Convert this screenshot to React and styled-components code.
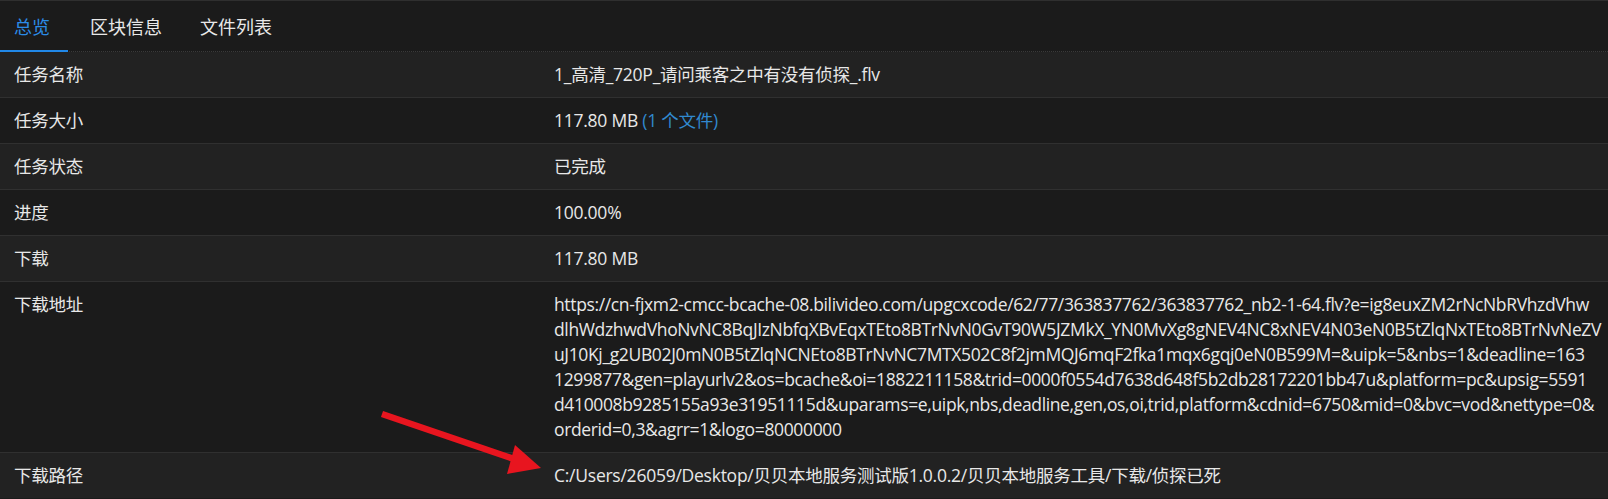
import React from "react";
import styled, { createGlobalStyle } from "styled-components";

const GlobalStyle = createGlobalStyle`
  html, body {
    margin: 0;
    padding: 0;
    background: #1b1b1b;
  }
  body {
    font-family: "Open Sans", "Noto Sans CJK SC", sans-serif;
    color: #e8e8e8;
  }
`;

const Page = styled.div`
  position: relative;
  width: 1608px;
  height: 499px;
  overflow: hidden;
  background: #1b1b1b;
  border-top: 1px solid #2f2f2f;
  box-sizing: border-box;
  font-size: 17.5px;
  letter-spacing: -0.25px;
`;

const TabBar = styled.div`
  display: flex;
  gap: 6px;
  height: 51px;
  box-sizing: border-box;
  border-bottom: 1px dotted #3a3a3a;
`;

const Tab = styled.div`
  display: flex;
  align-items: center;
  height: 51px;
  box-sizing: border-box;
  margin-bottom: -1px;
  padding: 0 16px;
  font-size: 18px;
  letter-spacing: 0;
  color: ${(p) => (p.$active ? "#2b8ce6" : "#e8e8e8")};
  border-bottom: 2px solid ${(p) => (p.$active ? "#2188e8" : "transparent")};
  cursor: pointer;
  &:first-child {
    padding: 0 18px 0 14px;
  }
`;

const Table = styled.div`
  display: flex;
  flex-direction: column;
`;

const Row = styled.div`
  display: grid;
  grid-template-columns: 540px 1fr;
  background: ${(p) => (p.$alt ? "#222222" : "#1b1b1b")};
  border-top: ${(p) => (p.$first ? "none" : "1px solid #303030")};
`;

const Label = styled.div`
  padding: 10px 14px;
  line-height: 25px;
  white-space: nowrap;
`;

const Value = styled.div`
  padding: 10px 12px 10px 14px;
  line-height: 25px;
  white-space: nowrap;
`;

const UrlBlock = styled.div`
  letter-spacing: -0.36px;
`;

const UrlLine = styled.span`
  display: block;
`;

const Link = styled.span`
  color: #3189cf;
  cursor: pointer;
`;

const ArrowSvg = styled.svg`
  position: absolute;
  left: 0;
  top: 0;
  pointer-events: none;
`;

const urlLines = [
  "https://cn-fjxm2-cmcc-bcache-08.bilivideo.com/upgcxcode/62/77/363837762/363837762_nb2-1-64.flv?e=ig8euxZM2rNcNbRVhzdVhw",
  "dlhWdzhwdVhoNvNC8BqJIzNbfqXBvEqxTEto8BTrNvN0GvT90W5JZMkX_YN0MvXg8gNEV4NC8xNEV4N03eN0B5tZlqNxTEto8BTrNvNeZV",
  "uJ10Kj_g2UB02J0mN0B5tZlqNCNEto8BTrNvNC7MTX502C8f2jmMQJ6mqF2fka1mqx6gqj0eN0B599M=&uipk=5&nbs=1&deadline=163",
  "1299877&gen=playurlv2&os=bcache&oi=1882211158&trid=0000f0554d7638d648f5b2db28172201bb47u&platform=pc&upsig=5591",
  "d410008b9285155a93e31951115d&uparams=e,uipk,nbs,deadline,gen,os,oi,trid,platform&cdnid=6750&mid=0&bvc=vod&nettype=0&",
  "orderid=0,3&agrr=1&logo=80000000",
];

const rows = [
  { label: "任务名称", value: "1_高清_720P_请问乘客之中有没有侦探_.flv" },
  {
    label: "任务大小",
    value: (
      <>
        117.80 MB <Link>(1 个文件)</Link>
      </>
    ),
  },
  { label: "任务状态", value: "已完成" },
  { label: "进度", value: "100.00%" },
  { label: "下载", value: "117.80 MB" },
  {
    label: "下载地址",
    value: (
      <UrlBlock>
        {urlLines.map((l, i) => (
          <UrlLine key={i}>{l}</UrlLine>
        ))}
      </UrlBlock>
    ),
  },
  {
    label: "下载路径",
    value: "C:/Users/26059/Desktop/贝贝本地服务测试版1.0.0.2/贝贝本地服务工具/下载/侦探已死",
  },
];

export default function App() {
  return (
    <>
      <GlobalStyle />
      <Page>
        <TabBar>
          <Tab $active>总览</Tab>
          <Tab>区块信息</Tab>
          <Tab>文件列表</Tab>
        </TabBar>
        <Table>
          {rows.map((r, i) => (
            <Row key={r.label} $alt={i % 2 === 0} $first={i === 0}>
              <Label>{r.label}</Label>
              <Value>{r.value}</Value>
            </Row>
          ))}
        </Table>
        <ArrowSvg width="1608" height="499" viewBox="0 0 1608 499">
          <line x1="382" y1="413" x2="514" y2="458" stroke="#e8151f" strokeWidth="6.5" />
          <polygon points="541,467 515,444 507,473" fill="#e8151f" />
        </ArrowSvg>
      </Page>
    </>
  );
}
